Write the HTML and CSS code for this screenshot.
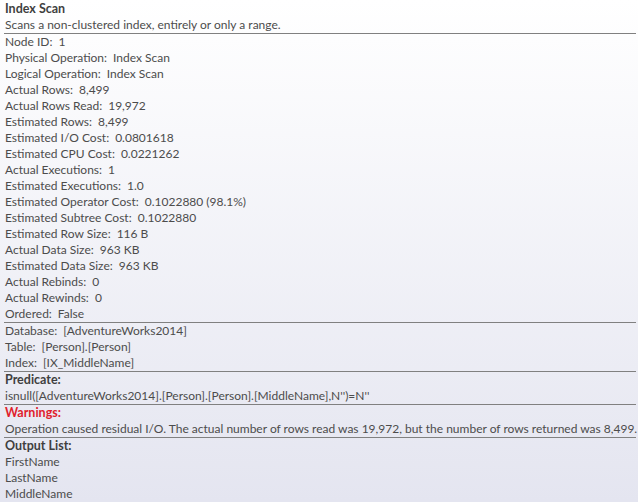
FILE: index.html
```html
<!DOCTYPE html>
<html>
<head>
<meta charset="utf-8">
<link rel="stylesheet" href="styles.css">
</head>
<body>
<div class="tip">
  <section class="sec">
    <div class="row title">Index Scan</div>
    <div class="row">Scans a non-clustered index, entirely or only a range.</div>
  </section>
  <section class="sec">
    <div class="row"><span class="k">Node ID:</span><span class="v">1</span></div>
    <div class="row"><span class="k">Physical Operation:</span><span class="v">Index Scan</span></div>
    <div class="row"><span class="k">Logical Operation:</span><span class="v">Index Scan</span></div>
    <div class="row"><span class="k">Actual Rows:</span><span class="v">8,499</span></div>
    <div class="row"><span class="k">Actual Rows Read:</span><span class="v">19,972</span></div>
    <div class="row"><span class="k">Estimated Rows:</span><span class="v">8,499</span></div>
    <div class="row"><span class="k">Estimated I/O Cost:</span><span class="v">0.0801618</span></div>
    <div class="row"><span class="k">Estimated CPU Cost:</span><span class="v">0.0221262</span></div>
    <div class="row"><span class="k">Actual Executions:</span><span class="v">1</span></div>
    <div class="row"><span class="k">Estimated Executions:</span><span class="v">1.0</span></div>
    <div class="row"><span class="k">Estimated Operator Cost:</span><span class="v">0.1022880 (98.1%)</span></div>
    <div class="row"><span class="k">Estimated Subtree Cost:</span><span class="v">0.1022880</span></div>
    <div class="row"><span class="k">Estimated Row Size:</span><span class="v">116 B</span></div>
    <div class="row"><span class="k">Actual Data Size:</span><span class="v">963 KB</span></div>
    <div class="row"><span class="k">Estimated Data Size:</span><span class="v">963 KB</span></div>
    <div class="row"><span class="k">Actual Rebinds:</span><span class="v">0</span></div>
    <div class="row"><span class="k">Actual Rewinds:</span><span class="v">0</span></div>
    <div class="row"><span class="k">Ordered:</span><span class="v">False</span></div>
  </section>
  <section class="sec">
    <div class="row"><span class="k">Database:</span><span class="v">[AdventureWorks2014]</span></div>
    <div class="row"><span class="k">Table:</span><span class="v">[Person].[Person]</span></div>
    <div class="row"><span class="k">Index:</span><span class="v">[IX_MiddleName]</span></div>
  </section>
  <section class="sec">
    <div class="row title">Predicate:</div>
    <div class="row">isnull([AdventureWorks2014].[Person].[Person].[MiddleName],N'')=N''</div>
  </section>
  <section class="sec">
    <div class="row title warn">Warnings:</div>
    <div class="row">Operation caused residual I/O. The actual number of rows read was 19,972, but the number of rows returned was 8,499.</div>
  </section>
  <section class="sec last">
    <div class="row title">Output List:</div>
    <div class="row">FirstName</div>
    <div class="row">LastName</div>
    <div class="row">MiddleName</div>
  </section>
</div>
</body>
</html>
```
FILE: styles.css
```css
html, body {
  margin: 0;
  padding: 0;
  height: 100%;
}
body {
  background: linear-gradient(#ffffff, #e4e5f0);
  font-family: "Lato", "Open Sans", sans-serif;
  font-size: 12px;
  color: #4c4c4c;
  overflow: hidden;
}
.tip {
  margin: 0 2px 0 4px;
  padding-top: 1px;
}
.sec {
  border-bottom: 1px solid #808080;
}
.sec.last {
  border-bottom: none;
}
.row {
  height: 16px;
  line-height: 16px;
  padding-left: 1px;
  white-space: nowrap;
}
.title {
  font-weight: bold;
  font-size: 12.5px;
  color: #3f3f3f;
}
.warn {
  color: #e0202c;
}
.v {
  margin-left: 6px;
}
```
